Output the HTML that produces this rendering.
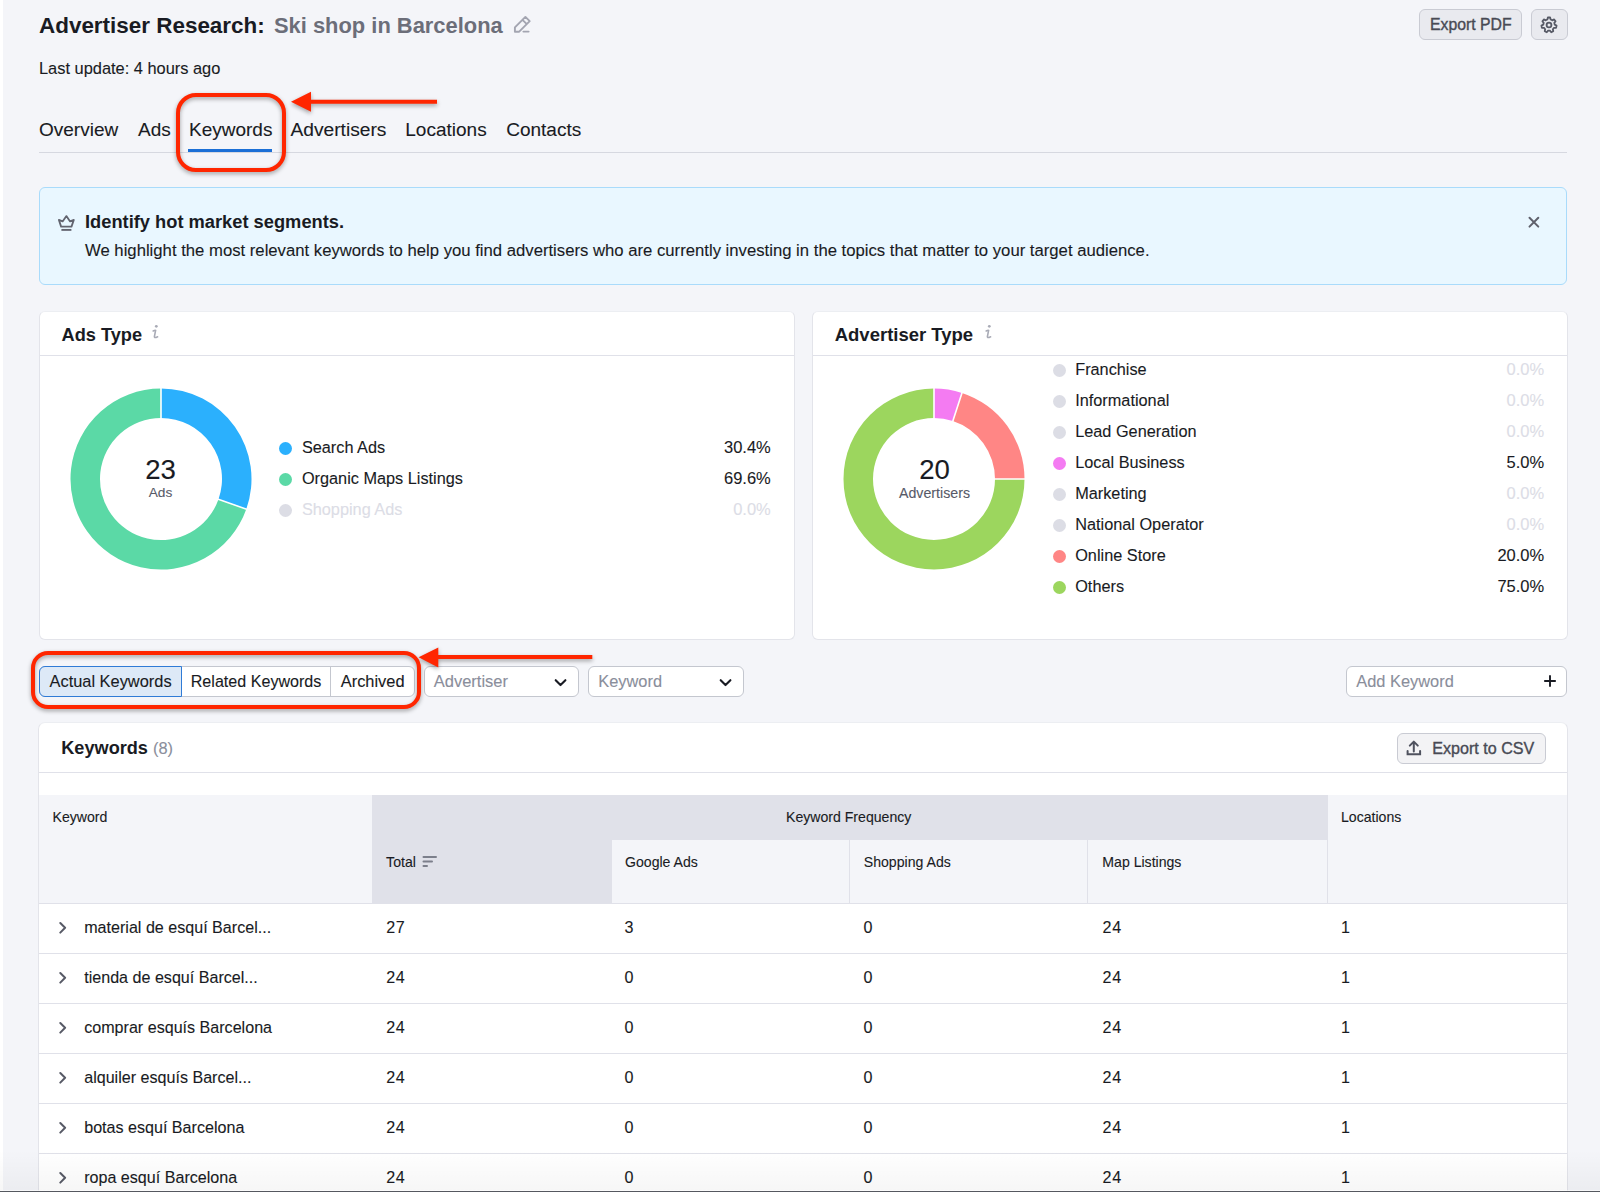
<!DOCTYPE html>
<html><head><meta charset="utf-8">
<style>
*{box-sizing:border-box;margin:0;padding:0}
html,body{width:1600px;height:1192px;overflow:hidden;background:#fff}
body{font-family:"Liberation Sans",sans-serif;color:#191b23}
#pg{position:absolute;left:0;top:0;width:1600px;height:1192px;overflow:hidden;background:#f4f5f9}
.a{position:absolute}
.t{position:absolute;white-space:nowrap;line-height:1;-webkit-text-stroke:.1px currentColor}
.b{-webkit-text-stroke:0}
.b{font-weight:bold}
.g{color:#6c6e79}
.card{position:absolute;background:#fff;border:1px solid #e3e4ea;border-top-color:#eceef2;border-radius:6px}
.dot{position:absolute;width:13px;height:13px;border-radius:50%}
.lg{font-size:16.3px}
.pc{font-size:16.5px;text-align:right}
.btn{position:absolute;background:rgba(138,142,155,.1);border:1px solid #c9cbd3;border-radius:6px}
.inp{position:absolute;background:#fff;border:1px solid #c4c7cf;border-radius:6px}
.th{font-size:14.1px}
.td{font-size:16.1px}
.hl{position:absolute;height:1px;background:#e0e1e9}
.vl{position:absolute;width:1px;background:#e0e1e9}
.red{position:absolute;border:4.2px solid #ff2600;filter:drop-shadow(0 2px 2px rgba(0,0,0,.35))}
</style></head>
<body><div id="pg">
<div class="a" style="left:0;top:0;width:3px;height:1192px;background:#fff"></div>

<!-- Title -->
<div class="t b" style="left:39px;top:15.2px;font-size:22.45px">Advertiser Research:</div>
<div class="t b g" style="left:274px;top:15.2px;font-size:21.9px">Ski shop in Barcelona</div>
<svg class="a" style="left:512px;top:15px" width="20" height="19" viewBox="0 0 20 19"><path d="M2.9 16.4 V12.4 L13.4 1.9 L17.7 6.2 L7.2 16.7 H2.9 Z M10.5 4.8 L14.8 9.1" fill="none" stroke="#a3a5b1" stroke-width="1.9" stroke-linejoin="round"/><path d="M11.4 16.6 H16.6" stroke="#a3a5b1" stroke-width="1.9" stroke-linecap="round"/></svg>
<div class="t" style="left:39px;top:60.3px;font-size:16.4px">Last update: 4 hours ago</div>

<div class="btn" style="left:1419px;top:9px;width:103px;height:31px"></div>
<div class="t" style="left:1430px;top:17px;font-size:15.8px;color:#484a54;-webkit-text-stroke:.35px #484a54">Export PDF</div>
<div class="btn" style="left:1531px;top:9px;width:37px;height:31px"></div>
<svg class="a" style="left:1538.8px;top:15px" width="20" height="20" viewBox="0 0 20 20"><path d="M8.88 2.48 L11.12 2.48 L11.64 4.54 L13.25 5.31 L15.18 4.44 L16.58 6.19 L15.29 7.88 L15.69 9.62 L17.58 10.58 L17.08 12.77 L14.96 12.81 L13.85 14.21 L14.27 16.28 L12.25 17.26 L10.89 15.63 L9.11 15.63 L7.75 17.26 L5.73 16.28 L6.15 14.21 L5.04 12.81 L2.92 12.77 L2.42 10.58 L4.31 9.62 L4.71 7.88 L3.42 6.19 L4.82 4.44 L6.75 5.31 L8.36 4.54Z" fill="none" stroke="#575a66" stroke-width="1.8" stroke-linejoin="round"/><circle cx="10" cy="10" r="2.4" fill="none" stroke="#575a66" stroke-width="1.8"/></svg>

<!-- Tabs -->
<div class="t" style="left:39px;top:119.7px;font-size:19px">Overview</div>
<div class="t" style="left:138px;top:119.7px;font-size:19px">Ads</div>
<div class="t" style="left:189px;top:119.7px;font-size:19px">Keywords</div>
<div class="t" style="left:290.5px;top:119.7px;font-size:19.2px">Advertisers</div>
<div class="t" style="left:405.3px;top:119.7px;font-size:19px">Locations</div>
<div class="t" style="left:506.2px;top:119.7px;font-size:19px">Contacts</div>
<div class="hl" style="left:39px;top:152px;width:1528px;background:#d6d8e0"></div>
<div class="a" style="left:188px;top:149px;width:84px;height:3px;background:#1b6fd6"></div>

<!-- Banner -->
<div class="a" style="left:39px;top:187px;width:1528px;height:98px;background:#e9f7ff;border:1px solid #a9dbfb;border-radius:6px"></div>
<svg class="a" style="left:57px;top:214px" width="19" height="18" viewBox="0 0 19 18"><path d="M1.9 5.9 L5.6 7.4 L9.4 2.1 L13.1 7.4 L16.8 5.9 L14.5 12.6 H4.1 Z" fill="none" stroke="#62646f" stroke-width="1.8" stroke-linejoin="round"/><path d="M4.4 15.9 H14.4" stroke="#62646f" stroke-width="1.9"/></svg>
<div class="t b" style="left:85px;top:212.6px;font-size:18.3px">Identify hot market segments.</div>
<svg class="a" style="left:1527px;top:215px" width="14" height="14" viewBox="0 0 14 14"><path d="M2.5 2.8 L11.3 11.6 M11.3 2.8 L2.5 11.6" stroke="#5f616c" stroke-width="2" stroke-linecap="round"/></svg>
<div class="t" style="left:85px;top:242.5px;font-size:16.69px">We highlight the most relevant keywords to help you find advertisers who are currently investing in the topics that matter to your target audience.</div>

<!-- Cards -->
<div class="card" style="left:38.5px;top:311px;width:756px;height:328.5px"></div>
<div class="hl" style="left:39.5px;top:354.5px;width:754px"></div>
<div class="t b" style="left:61.5px;top:325.5px;font-size:18.2px">Ads Type</div>
<svg class="a" style="left:150px;top:324px" width="11" height="16" viewBox="0 0 11 16"><circle cx="6.3" cy="2.3" r="1.4" fill="#a9abb6"/><path d="M3.2 7 Q5 6 5.6 6.4 L4.4 12.6 Q4.3 13.8 6.2 13.4 L7.6 12.8" fill="none" stroke="#a9abb6" stroke-width="1.6" stroke-linecap="round"/></svg>
<svg class="a" style="left:65.6px;top:384px" width="190" height="190" viewBox="0 0 190 190">
<path d="M95.00 4.50A90.5 90.5 0 0 1 180.34 125.12L152.52 115.30A61 61 0 0 0 95.00 34.00Z" fill="#2bb0fd"/>
<path d="M180.34 125.12A90.5 90.5 0 1 1 95.00 4.50L95.00 34.00A61 61 0 1 0 152.52 115.30Z" fill="#5bd9a6"/>
<path d="M95.00 35.00L95.00 3.50 M151.58 114.97L181.28 125.45" stroke="#fff" stroke-width="1.6"/>
</svg>
<div class="t" style="left:60px;top:455.8px;width:201px;text-align:center;font-size:27.6px">23</div>
<div class="t g" style="left:60px;top:486px;width:201px;text-align:center;font-size:13.7px;color:#575a68">Ads</div>
<div class="dot" style="left:279.2px;top:441.9px;background:#2bb0fd"></div>
<div class="dot" style="left:279.2px;top:472.6px;background:#5bd9a6"></div>
<div class="dot" style="left:279.2px;top:503.5px;background:#dcdde5"></div>
<div class="t lg" style="left:301.9px;top:438.7px">Search Ads</div>
<div class="t lg" style="left:301.9px;top:469.5px">Organic Maps Listings</div>
<div class="t lg" style="left:301.9px;top:500.5px;color:#dcdde6">Shopping Ads</div>
<div class="t pc" style="left:600px;width:170.75px;top:438.7px">30.4%</div>
<div class="t pc" style="left:600px;width:170.75px;top:469.5px">69.6%</div>
<div class="t pc" style="left:600px;width:170.75px;top:500.5px;color:#dcdde6">0.0%</div>

<div class="card" style="left:811.5px;top:311px;width:756px;height:328.5px"></div>
<div class="hl" style="left:812.5px;top:354.5px;width:754px"></div>
<div class="t b" style="left:834.7px;top:325.5px;font-size:18.5px">Advertiser Type</div>
<svg class="a" style="left:983px;top:324px" width="11" height="16" viewBox="0 0 11 16"><circle cx="6.3" cy="2.3" r="1.4" fill="#a9abb6"/><path d="M3.2 7 Q5 6 5.6 6.4 L4.4 12.6 Q4.3 13.8 6.2 13.4 L7.6 12.8" fill="none" stroke="#a9abb6" stroke-width="1.6" stroke-linecap="round"/></svg>
<svg class="a" style="left:839.2px;top:384px" width="190" height="190" viewBox="0 0 190 190">
<path d="M95.00 4.50A90.5 90.5 0 0 1 122.97 8.93L113.85 36.99A61 61 0 0 0 95.00 34.00Z" fill="#f47bf2"/>
<path d="M122.97 8.93A90.5 90.5 0 0 1 185.50 95.00L156.00 95.00A61 61 0 0 0 113.85 36.99Z" fill="#ff8685"/>
<path d="M185.50 95.00A90.5 90.5 0 1 1 95.00 4.50L95.00 34.00A61 61 0 1 0 156.00 95.00Z" fill="#9cd65e"/>
<path d="M95.00 35.00L95.00 3.50 M113.54 37.94L123.28 7.98 M155.00 95.00L186.50 95.00" stroke="#fff" stroke-width="1.6"/>
</svg>
<div class="t" style="left:834px;top:455.8px;width:201px;text-align:center;font-size:27.6px">20</div>
<div class="t g" style="left:834px;top:486px;width:201px;text-align:center;font-size:14.2px;color:#575a68">Advertisers</div>
<div class="dot" style="left:1052.7px;top:363.9px;background:#dcdde5"></div>
<div class="t lg" style="left:1075.2px;top:361.2px">Franchise</div>
<div class="t pc" style="left:1370px;width:174.2px;top:361.2px;color:#dcdde6">0.0%</div>
<div class="dot" style="left:1052.7px;top:394.9px;background:#dcdde5"></div>
<div class="t lg" style="left:1075.2px;top:392.2px">Informational</div>
<div class="t pc" style="left:1370px;width:174.2px;top:392.2px;color:#dcdde6">0.0%</div>
<div class="dot" style="left:1052.7px;top:425.9px;background:#dcdde5"></div>
<div class="t lg" style="left:1075.2px;top:423.2px">Lead Generation</div>
<div class="t pc" style="left:1370px;width:174.2px;top:423.2px;color:#dcdde6">0.0%</div>
<div class="dot" style="left:1052.7px;top:456.9px;background:#f47bf2"></div>
<div class="t lg" style="left:1075.2px;top:454.2px">Local Business</div>
<div class="t pc" style="left:1370px;width:174.2px;top:454.2px">5.0%</div>
<div class="dot" style="left:1052.7px;top:487.9px;background:#dcdde5"></div>
<div class="t lg" style="left:1075.2px;top:485.2px">Marketing</div>
<div class="t pc" style="left:1370px;width:174.2px;top:485.2px;color:#dcdde6">0.0%</div>
<div class="dot" style="left:1052.7px;top:518.9px;background:#dcdde5"></div>
<div class="t lg" style="left:1075.2px;top:516.2px">National Operator</div>
<div class="t pc" style="left:1370px;width:174.2px;top:516.2px;color:#dcdde6">0.0%</div>
<div class="dot" style="left:1052.7px;top:549.9px;background:#ff8685"></div>
<div class="t lg" style="left:1075.2px;top:547.2px">Online Store</div>
<div class="t pc" style="left:1370px;width:174.2px;top:547.2px">20.0%</div>
<div class="dot" style="left:1052.7px;top:580.9px;background:#9cd65e"></div>
<div class="t lg" style="left:1075.2px;top:578.2px">Others</div>
<div class="t pc" style="left:1370px;width:174.2px;top:578.2px">75.0%</div>

<!-- Filter row -->
<div class="inp" style="left:39px;top:666px;width:376px;height:31px"></div>
<div class="a" style="left:39px;top:666px;width:143px;height:31px;background:#dde9f7;border:1px solid #2f7bd6;border-radius:6px 0 0 6px"></div>
<div class="vl" style="left:330px;top:667px;height:29px;background:#c4c7cf"></div>
<div class="t" style="left:49.5px;top:672.8px;font-size:16.4px">Actual Keywords</div>
<div class="t" style="left:190.75px;top:672.8px;font-size:16.1px">Related Keywords</div>
<div class="t" style="left:340.75px;top:672.8px;font-size:16.4px">Archived</div>
<div class="inp" style="left:423.9px;top:666px;width:155px;height:31px"></div>
<div class="t" style="left:433.75px;top:672.8px;font-size:16.5px;color:#8a8e9b">Advertiser</div>
<svg class="a" style="left:552px;top:675px" width="16" height="14" viewBox="0 0 16 14"><path d="M3.7 5.2 L8.5 10.1 L13.4 5.2" fill="none" stroke="#191b23" stroke-width="2.1" stroke-linecap="round" stroke-linejoin="round"/></svg>
<div class="inp" style="left:588.1px;top:666px;width:156px;height:31px"></div>
<div class="t" style="left:598.25px;top:672.8px;font-size:16.4px;color:#8a8e9b">Keyword</div>
<svg class="a" style="left:717.1px;top:675px" width="16" height="14" viewBox="0 0 16 14"><path d="M3.7 5.2 L8.5 10.1 L13.4 5.2" fill="none" stroke="#191b23" stroke-width="2.1" stroke-linecap="round" stroke-linejoin="round"/></svg>
<div class="inp" style="left:1345.7px;top:666px;width:221.8px;height:31px"></div>
<div class="t" style="left:1356.3px;top:672.8px;font-size:16.4px;color:#8a8e9b">Add Keyword</div>
<svg class="a" style="left:1541.5px;top:673.3px" width="16" height="16" viewBox="0 0 16 16"><path d="M8 2.9 V13.1 M2.9 8 H13.1" stroke="#191b23" stroke-width="1.9" stroke-linecap="round"/></svg>

<!-- Keywords table -->
<div class="card" style="left:37.6px;top:722.2px;width:1530px;height:600px;border-radius:7px 7px 0 0"></div>
<div class="hl" style="left:38.6px;top:772px;width:1528px"></div>
<div class="t b" style="left:61.25px;top:739px;font-size:18.15px">Keywords</div>
<div class="t g" style="left:153px;top:739.6px;font-size:16.4px;color:#8a8e9b">(8)</div>
<div class="btn" style="left:1397px;top:733px;width:149px;height:31px"></div>
<svg class="a" style="left:1404px;top:738px" width="20" height="20" viewBox="0 0 20 20"><path d="M9.8 13.5 V3.8 M5.8 7.6 L9.8 3.6 L13.8 7.6" fill="none" stroke="#4f525e" stroke-width="2" stroke-linecap="round" stroke-linejoin="round"/><path d="M3.6 13 V16.3 H16.1 V13" fill="none" stroke="#4f525e" stroke-width="2" stroke-linecap="round" stroke-linejoin="miter"/></svg>
<div class="t" style="left:1432.3px;top:739.9px;font-size:16.1px;color:#484a54;-webkit-text-stroke:.35px #484a54">Export to CSV</div>
<div class="a" style="left:38.6px;top:795px;width:1528px;height:108.5px;background:#f4f5f9"></div>
<div class="a" style="left:371.7px;top:795px;width:955.3px;height:45px;background:#e0e1e9"></div>
<div class="a" style="left:371.7px;top:840px;width:240.2px;height:63.5px;background:#e0e1e9"></div>
<div class="vl" style="left:849px;top:840px;height:63.5px"></div>
<div class="vl" style="left:1087px;top:840px;height:63.5px"></div>
<div class="vl" style="left:1327px;top:795px;height:108.5px"></div>
<div class="hl" style="left:38.6px;top:903px;width:1528px"></div>
<div class="t th" style="left:52.5px;top:810.3px">Keyword</div>
<div class="t th" style="left:786px;top:810.3px">Keyword Frequency</div>
<div class="t th" style="left:1341px;top:810.3px">Locations</div>
<div class="t th" style="left:386.1px;top:855px">Total</div>
<svg class="a" style="left:422px;top:855px" width="16" height="13" viewBox="0 0 16 13"><path d="M1.5 2 H14 M1.5 6.6 H10 M1.5 11 H5" stroke="#7c7f8b" stroke-width="2" stroke-linecap="round"/></svg>
<div class="t th" style="left:625px;top:855px">Google Ads</div>
<div class="t th" style="left:863.8px;top:855px">Shopping Ads</div>
<div class="t th" style="left:1102.3px;top:855px">Map Listings</div>
<svg class="a" style="left:56px;top:920.5px" width="12" height="13" viewBox="0 0 12 13"><path d="M4.3 2 L9.1 6.8 L4.3 11.6" fill="none" stroke="#575a66" stroke-width="2" stroke-linecap="round" stroke-linejoin="round"/></svg>
<div class="t td" style="left:84.2px;top:918.9px">material de esquí Barcel...</div>
<div class="t td" style="letter-spacing:.7px;left:386.2px;top:918.9px">27</div>
<div class="t td" style="letter-spacing:.7px;left:624.6px;top:918.9px">3</div>
<div class="t td" style="letter-spacing:.7px;left:863.6px;top:918.9px">0</div>
<div class="t td" style="letter-spacing:.7px;left:1102.6px;top:918.9px">24</div>
<div class="t td" style="letter-spacing:.7px;left:1341px;top:918.9px">1</div>
<div class="hl" style="left:38.6px;top:953px;width:1528px"></div>
<svg class="a" style="left:56px;top:970.5px" width="12" height="13" viewBox="0 0 12 13"><path d="M4.3 2 L9.1 6.8 L4.3 11.6" fill="none" stroke="#575a66" stroke-width="2" stroke-linecap="round" stroke-linejoin="round"/></svg>
<div class="t td" style="left:84.2px;top:968.9px">tienda de esquí Barcel...</div>
<div class="t td" style="letter-spacing:.7px;left:386.2px;top:968.9px">24</div>
<div class="t td" style="letter-spacing:.7px;left:624.6px;top:968.9px">0</div>
<div class="t td" style="letter-spacing:.7px;left:863.6px;top:968.9px">0</div>
<div class="t td" style="letter-spacing:.7px;left:1102.6px;top:968.9px">24</div>
<div class="t td" style="letter-spacing:.7px;left:1341px;top:968.9px">1</div>
<div class="hl" style="left:38.6px;top:1003px;width:1528px"></div>
<svg class="a" style="left:56px;top:1020.5px" width="12" height="13" viewBox="0 0 12 13"><path d="M4.3 2 L9.1 6.8 L4.3 11.6" fill="none" stroke="#575a66" stroke-width="2" stroke-linecap="round" stroke-linejoin="round"/></svg>
<div class="t td" style="left:84.2px;top:1018.9px">comprar esquís Barcelona</div>
<div class="t td" style="letter-spacing:.7px;left:386.2px;top:1018.9px">24</div>
<div class="t td" style="letter-spacing:.7px;left:624.6px;top:1018.9px">0</div>
<div class="t td" style="letter-spacing:.7px;left:863.6px;top:1018.9px">0</div>
<div class="t td" style="letter-spacing:.7px;left:1102.6px;top:1018.9px">24</div>
<div class="t td" style="letter-spacing:.7px;left:1341px;top:1018.9px">1</div>
<div class="hl" style="left:38.6px;top:1053px;width:1528px"></div>
<svg class="a" style="left:56px;top:1070.5px" width="12" height="13" viewBox="0 0 12 13"><path d="M4.3 2 L9.1 6.8 L4.3 11.6" fill="none" stroke="#575a66" stroke-width="2" stroke-linecap="round" stroke-linejoin="round"/></svg>
<div class="t td" style="left:84.2px;top:1068.9px">alquiler esquís Barcel...</div>
<div class="t td" style="letter-spacing:.7px;left:386.2px;top:1068.9px">24</div>
<div class="t td" style="letter-spacing:.7px;left:624.6px;top:1068.9px">0</div>
<div class="t td" style="letter-spacing:.7px;left:863.6px;top:1068.9px">0</div>
<div class="t td" style="letter-spacing:.7px;left:1102.6px;top:1068.9px">24</div>
<div class="t td" style="letter-spacing:.7px;left:1341px;top:1068.9px">1</div>
<div class="hl" style="left:38.6px;top:1103px;width:1528px"></div>
<svg class="a" style="left:56px;top:1120.5px" width="12" height="13" viewBox="0 0 12 13"><path d="M4.3 2 L9.1 6.8 L4.3 11.6" fill="none" stroke="#575a66" stroke-width="2" stroke-linecap="round" stroke-linejoin="round"/></svg>
<div class="t td" style="left:84.2px;top:1118.9px">botas esquí Barcelona</div>
<div class="t td" style="letter-spacing:.7px;left:386.2px;top:1118.9px">24</div>
<div class="t td" style="letter-spacing:.7px;left:624.6px;top:1118.9px">0</div>
<div class="t td" style="letter-spacing:.7px;left:863.6px;top:1118.9px">0</div>
<div class="t td" style="letter-spacing:.7px;left:1102.6px;top:1118.9px">24</div>
<div class="t td" style="letter-spacing:.7px;left:1341px;top:1118.9px">1</div>
<div class="hl" style="left:38.6px;top:1153px;width:1528px"></div>
<svg class="a" style="left:56px;top:1170.5px" width="12" height="13" viewBox="0 0 12 13"><path d="M4.3 2 L9.1 6.8 L4.3 11.6" fill="none" stroke="#575a66" stroke-width="2" stroke-linecap="round" stroke-linejoin="round"/></svg>
<div class="t td" style="left:84.2px;top:1168.9px">ropa esquí Barcelona</div>
<div class="t td" style="letter-spacing:.7px;left:386.2px;top:1168.9px">24</div>
<div class="t td" style="letter-spacing:.7px;left:624.6px;top:1168.9px">0</div>
<div class="t td" style="letter-spacing:.7px;left:863.6px;top:1168.9px">0</div>
<div class="t td" style="letter-spacing:.7px;left:1102.6px;top:1168.9px">24</div>
<div class="t td" style="letter-spacing:.7px;left:1341px;top:1168.9px">1</div>

<div class="red" style="left:176px;top:93px;width:110px;height:79px;border-radius:20px"></div>
<svg class="a" style="left:285px;top:85px;overflow:visible;filter:drop-shadow(0 2px 2px rgba(0,0,0,.35))" width="160" height="35" viewBox="0 0 160 35"><path d="M6 16.8 L26 6.8 L26 14.8 L152 14.8 L152 18.8 L26 18.8 L26 26.8 Z" fill="#ff2600"/></svg>
<svg class="a" style="left:410px;top:640px;overflow:visible;filter:drop-shadow(0 2px 2px rgba(0,0,0,.35))" width="190" height="35" viewBox="0 0 190 35"><path d="M8.6 17.3 L28.3 7.5 L28.3 14.9 L182.3 14.9 L182.3 19 L28.3 19 L28.3 27.4 Z" fill="#ff2600"/></svg>
<div class="red" style="left:31px;top:650.5px;width:390px;height:58px;border-radius:17px"></div>
<div class="a" style="left:0;top:1150px;width:1600px;height:41px;background:linear-gradient(rgba(0,0,0,0),rgba(0,0,0,.035))"></div>
<div class="a" style="left:0;top:1190px;width:1600px;height:1px;background:rgba(255,255,255,.6)"></div>
<div class="a" style="left:0;top:1191px;width:1600px;height:1px;background:#55585f"></div>
</div></body></html>
